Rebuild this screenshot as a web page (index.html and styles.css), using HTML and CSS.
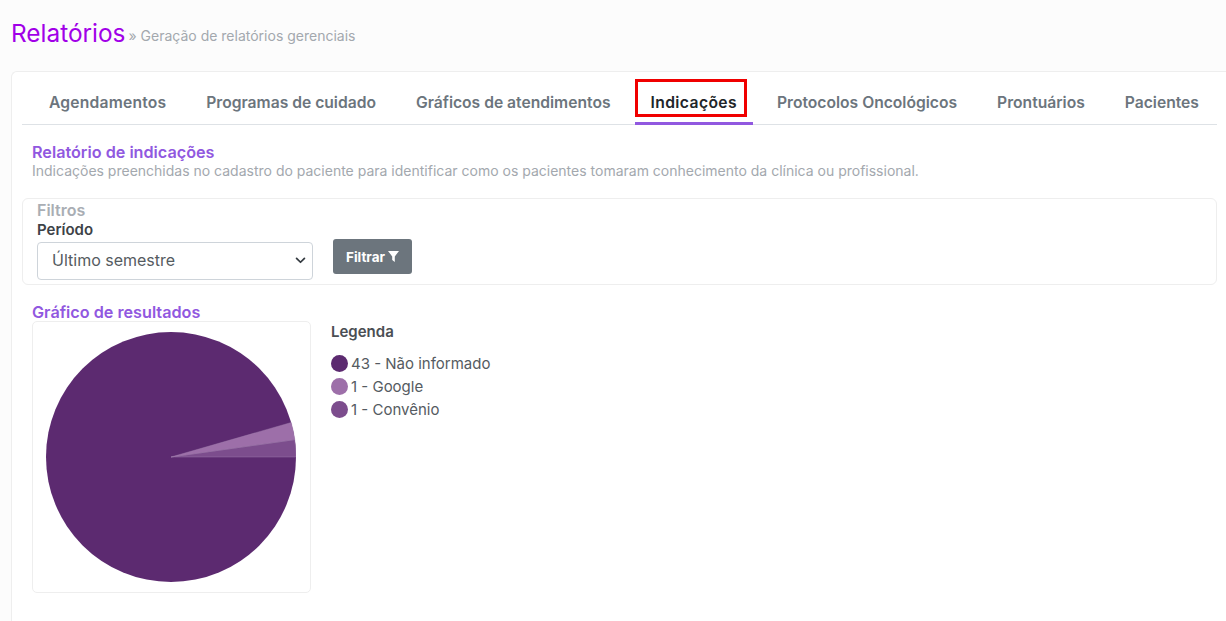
FILE: index.html
```html
<!DOCTYPE html>
<html>
	<head>
		<title>Relatórios</title>
		<link rel="stylesheet" href="styles.css">
	</head>
	<body>
		<header class="page-title">
			<h1>Relatórios</h1>
			<span class="crumb">» Geração de relatórios gerenciais</span>
		</header>
		<main class="card">
			<nav class="tabs">
				<a class="tab">Agendamentos</a>
				<a class="tab">Programas de cuidado</a>
				<a class="tab">Gráficos de atendimentos</a>
				<a class="tab active">Indicações<span class="highlight"></span></a>
				<a class="tab">Protocolos Oncológicos</a>
				<a class="tab">Prontuários</a>
				<a class="tab">Pacientes</a>
			</nav>
			<section class="intro">
				<h2>Relatório de indicações</h2>
				<p>Indicações preenchidas no cadastro do paciente para identificar como os pacientes tomaram conhecimento da clínica ou profissional.</p>
			</section>
			<section class="filters">
				<h3>Filtros</h3>
				<div class="filter-row">
					<div class="field">
						<label>Período</label>
						<div class="select">
							<span>Último semestre</span>
							<svg width="11" height="7" viewBox="0 0 12 8"><path d="M1.5 1.5 6 6l4.5-4.5" fill="none" stroke="#343a40" stroke-width="2" stroke-linecap="round" stroke-linejoin="round"/></svg>
						</div>
					</div>
					<button class="btn">Filtrar
						<svg width="11" height="11" viewBox="0 0 11 11"><path d="M0 0h11L6.8 5.4V11L4.2 9V5.4z" fill="#fff"/></svg>
					</button>
				</div>
			</section>
			<section class="results">
				<h2>Gráfico de resultados</h2>
				<div class="results-row">
					<div class="chart">
						<svg width="250" height="250" viewBox="0 0 250 250">
							<circle cx="125" cy="125" r="125" fill="#5c2a70"/>
							<path d="M125 125 250 125A125 125 0 0 0 248.8 107.6Z" fill="#7c4d8d" stroke="#a583b1" stroke-width=".4"/>
							<path d="M125 125 248.8 107.6A125 125 0 0 0 245.2 90.5Z" fill="#9d6fa9" stroke="#a583b1" stroke-width=".4"/>
						</svg>
					</div>
					<div class="legend">
						<h4>Legenda</h4>
						<ul>
							<li><i class="dot dot-1"></i>43 - Não informado</li>
							<li><i class="dot dot-2"></i>1 - Google</li>
							<li><i class="dot dot-3"></i>1 - Convênio</li>
						</ul>
					</div>
				</div>
			</section>
		</main>
	</body>
</html>
```

FILE: styles.css
```css
html, body {
	height: 100%;
}
body {
	margin: 0;
	background-color: #fcfcfc;
	font-family: "Inter", "Liberation Sans", sans-serif;
	overflow: hidden;
}
.page-title {
	display: flex;
	align-items: flex-start;
	padding: 18px 0 0 11px;
	height: 53px;
	box-sizing: border-box;
}
h1 {
	margin: 0;
	font-size: 24.4px;
	line-height: 30px;
	font-weight: 400;
	color: #a100e8;
}
.crumb {
	margin: 9px 0 0 3px;
	font-size: 14px;
	line-height: 18px;
	color: #a3a8ae;
}
.card {
	margin: 18px 0 0 11px;
	padding: 0 0 0 10px;
	background-color: #fff;
	border: 1px solid #eeeeee;
	border-right: 0;
	border-radius: 6px 0 0 0;
	height: 560px;
}
.tabs {
	display: flex;
	width: 1195px;
	height: 53px;
	box-sizing: border-box;
	border-bottom: 1px solid #dee2e6;
}
.tab {
	flex: none;
	position: relative;
	padding: 22px 16px 0;
	height: 53px;
	box-sizing: border-box;
	margin-right: 8px;
	font-size: 15.65px;
	line-height: 18px;
	font-weight: 600;
	white-space: nowrap;
	color: #6c757d;
}
.tab:first-child {
	margin-left: 11px;
	letter-spacing: .2px;
}
.tab.active {
	color: #212529;
	letter-spacing: .4px;
	border-bottom: 3px solid #9158e0;
}
.highlight {
	position: absolute;
	left: 0;
	top: 7px;
	width: 112px;
	height: 38px;
	box-sizing: border-box;
	border: 3px solid #f00000;
}
.intro {
	padding: 18px 0 0 10px;
}
h2 {
	margin: 0;
	font-size: 16.2px;
	line-height: 18px;
	font-weight: 600;
	color: #9158e0;
}
.intro p {
	margin: 1px 0 0;
	font-size: 14px;
	line-height: 18px;
	color: #a3a8ae;
}
.filters {
	margin-top: 18px;
	height: 87px;
	box-sizing: border-box;
	padding: 2px 14px 0;
	border: 1px solid #eeeeee;
	border-radius: 6px;
	width: 1195px;
}
h3 {
	margin: 0 0 1px;
	font-size: 16px;
	line-height: 18px;
	font-weight: 600;
	color: #a9aeb4;
}
.filter-row {
	display: flex;
	align-items: flex-end;
	gap: 20px;
}
.field label {
	display: block;
	font-size: 15px;
	line-height: 19px;
	font-weight: 600;
	color: #3d4247;
}
.select {
	display: flex;
	align-items: center;
	justify-content: space-between;
	width: 276px;
	height: 38px;
	margin-top: 3px;
	box-sizing: border-box;
	padding: 0 6px 2px 14px;
	border: 1px solid #ced4da;
	border-radius: 4px;
	font-size: 16px;
	color: #555b61;
}
.btn {
	display: flex;
	align-items: center;
	justify-content: center;
	gap: 3px;
	width: 79px;
	height: 35px;
	margin-bottom: 6px;
	border: 0;
	border-radius: 3px;
	background-color: #6c757d;
	color: #fff;
	font-family: inherit;
	font-size: 13.5px;
	font-weight: 700;
}
.results {
	padding: 18px 0 0 10px;
}
.results-row {
	display: flex;
}
.chart {
	width: 279px;
	height: 272px;
	box-sizing: border-box;
	padding: 10px 0 0 13px;
	border: 1px solid #eeeeee;
	border-radius: 5px;
}
.legend {
	margin-left: 20px;
}
h4 {
	margin: 1px 0 0;
	font-size: 15px;
	line-height: 20px;
	font-weight: 600;
	color: #4a4e53;
}
.legend ul {
	margin: 10px 0 0;
	padding: 0;
	list-style: none;
}
.legend li {
	display: flex;
	align-items: center;
	height: 23px;
	font-size: 15px;
	color: #555b61;
}
.dot {
	width: 17px;
	height: 17px;
	margin-right: 3px;
	border-radius: 50%;
}
.dot-1 { background-color: #5c2a70; }
.dot-2 { background-color: #9d6fa9; }
.dot-3 { background-color: #7c4d8d; }
```
